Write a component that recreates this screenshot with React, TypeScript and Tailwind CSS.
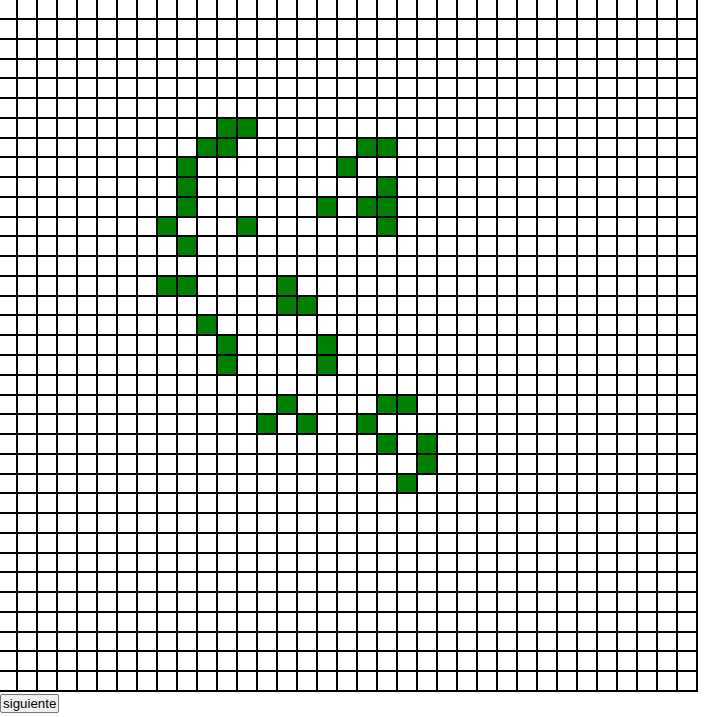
const SIZE = 35;

// live cells as [row, col]; row 0 / col 0 are the clipped edge cells
const LIVE: [number, number][] = [
  [6, 11], [6, 12],
  [7, 10], [7, 11], [7, 18], [7, 19],
  [8, 9], [8, 17],
  [9, 9], [9, 19],
  [10, 9], [10, 16], [10, 18], [10, 19],
  [11, 8], [11, 12], [11, 19],
  [12, 9],
  [14, 8], [14, 9], [14, 14],
  [15, 14], [15, 15],
  [16, 10],
  [17, 11], [17, 16],
  [18, 11], [18, 16],
  [20, 14], [20, 19], [20, 20],
  [21, 13], [21, 15], [21, 18],
  [22, 19], [22, 21],
  [23, 21],
  [24, 20],
];

const alive = new Set(LIVE.map(([r, c]) => `${r}-${c}`));

const App = () => {
  const cells = [];
  for (let r = 0; r < SIZE; r++) {
    for (let c = 0; c < SIZE; c++) {
      const on = alive.has(`${r}-${c}`);
      cells.push(
        <div
          key={`${r}-${c}`}
          className={`border-r-2 border-b-2 border-black ${on ? "bg-[#008000]" : "bg-white"}`}
        />
      );
    }
  }

  return (
    <div className="flex flex-col items-start bg-white font-['Liberation_Sans',Arial,sans-serif]">
      <div className="grid h-[692px] w-[698px] grid-cols-[18px_repeat(34,20px)] grid-rows-[20px_repeat(34,minmax(0,1fr))]">
        {cells}
      </div>
      <button className="mt-[2px] rounded-[2px] border border-[#767676] bg-[#efefef] px-[2px] py-[1px] text-[13.33px] leading-[15px] text-black">
        siguiente
      </button>
    </div>
  );
};

export default App;
